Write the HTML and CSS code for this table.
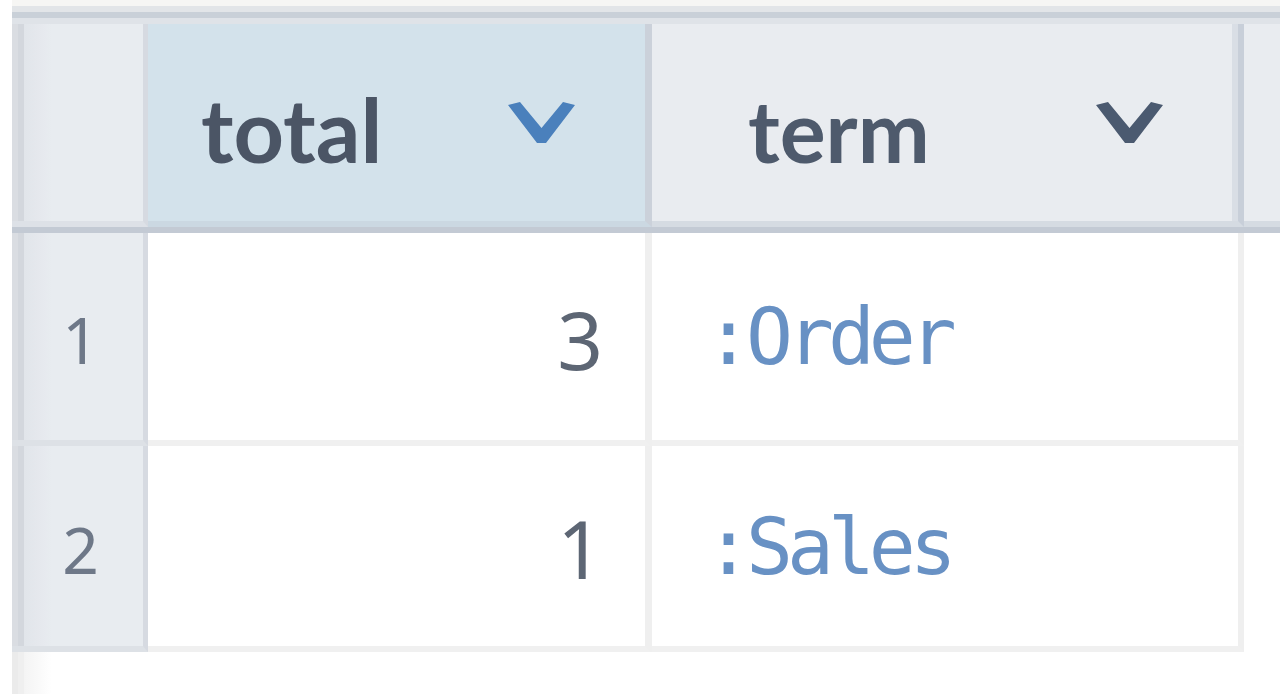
FILE: index.html
```html
<!DOCTYPE html>
<html lang="en">
<head>
<meta charset="utf-8">
<title>Query result</title>
<link rel="stylesheet" href="styles.css">
</head>
<body>
<div class="page">
  <div class="topstrip"></div>
  <div class="toprule"></div>
  <div class="grid-row head-row">
    <div class="gutter gutter-head"></div>
    <div class="hcell hcell-total">
      <span class="hlabel">total</span>
      <svg class="chev chev-blue" viewBox="0 0 67 41" width="67" height="41" aria-hidden="true"><polygon points="0,3 12,0 33.5,26 55,0 67,3 38,41 29,41"/></svg>
    </div>
    <div class="hcell hcell-term">
      <span class="hlabel">term</span>
      <svg class="chev chev-dark" viewBox="0 0 67 41" width="67" height="41" aria-hidden="true"><polygon points="0,3 12,0 33.5,26 55,0 67,3 38,41 29,41"/></svg>
    </div>
    <div class="hcell hcell-rest"></div>
  </div>
  <div class="grid-row data-row row-1">
    <div class="gutter rownum">1</div>
    <div class="cell cell-num">3</div>
    <div class="cell cell-kw">:Order</div>
    <div class="cell-rest"></div>
  </div>
  <div class="grid-row data-row row-2">
    <div class="gutter rownum">2</div>
    <div class="cell cell-num">1</div>
    <div class="cell cell-kw">:Sales</div>
    <div class="cell-rest"></div>
  </div>
  <div class="below"></div>
</div>
</body>
</html>
```
FILE: styles.css
```css
html, body {
  margin: 0;
  padding: 0;
  background: #ffffff;
}

body {
  width: 1280px;
  height: 694px;
  overflow: hidden;
}

.page {
  margin-left: 12px;
  width: 1268px;
}

.topstrip {
  height: 6px;
  background: #f6f6f4;
}

.toprule {
  height: 18px;
  background: linear-gradient(to bottom,
    #e2e5e8 0, #e2e5e8 6px,
    #c9d0d8 6px, #c9d0d8 12px,
    #dfe3e8 12px, #dfe3e8 18px);
}

.grid-row {
  display: grid;
  grid-template-columns: 136px 504px 592px 1fr;
}

/* ---------- header ---------- */
.head-row {
  height: 209px;
  border-bottom: 6px solid #c3cad4;
  box-sizing: border-box;
}

.gutter {
  background: linear-gradient(to right,
    #dadde2 0, #dadde2 6px,
    #d3d7dd 6px, #d3d7dd 12px,
    #e1e5ea 12px, #e6e9ee 30px, #e8ecf0 40px);
  border-right: 5px solid #d6dae1;
}

.gutter-head {
  border-bottom: 6px solid #dde1e7;
}

.hcell {
  display: flex;
  align-items: center;
  justify-content: space-between;
  border-bottom: 6px solid #d5dbe2;
  min-width: 0;
}

.hlabel {
  font-family: Lato, "Open Sans", sans-serif;
  font-weight: 700;
  font-size: 88px;
  line-height: 1.2;
  color: #4b5565;
  margin-top: 14px;
}

.hcell-total {
  background: #d3e2eb;
  border-bottom-color: #cbd8e2;
  border-right: 7px solid #cbd1da;
  padding: 0 70px 0 53px;
}

.hcell-term {
  background: #e9ecf0;
  border-right: 6px solid #c8cfd9;
  box-shadow: inset -6px 0 0 #d9dee5;
  padding: 0 75px 0 96px;
}

.hcell-term .hlabel {
  color: #4e5a6c;
  font-size: 86px;
}

.hcell-rest {
  background: #e9ecf0;
}

.chev {
  display: block;
  flex: none;
}

.chev-blue {
  fill: #4a80bc;
}

.chev-dark {
  fill: #4b5a70;
}

/* ---------- data rows ---------- */
.row-1 {
  height: 213px;
}

.row-2 {
  height: 206px;
}

.rownum {
  display: flex;
  align-items: center;
  justify-content: center;
  border-bottom: 6px solid #dde1e6;
  font-family: "Noto Sans", "Open Sans", sans-serif;
  font-size: 64px;
  color: #6e7888;
  padding-top: 6px;
  padding-left: 6px;
}

.cell {
  display: flex;
  align-items: center;
  background: #ffffff;
  border-bottom: 6px solid #f0f0f0;
}

.cell-num {
  justify-content: flex-end;
  border-right: 7px solid #efefef;
  padding-right: 42px;
  padding-top: 4px;
  font-family: "Noto Sans", "Open Sans", sans-serif;
  font-size: 80px;
  line-height: 1.2;
  color: #5d6674;
}

.cell-kw {
  border-right: 6px solid #efefef;
  padding-left: 53px;
  padding-top: 2px;
  font-family: "DejaVu Sans Mono", "Liberation Mono", monospace;
  font-size: 78px;
  letter-spacing: -6px;
  line-height: 1.16;
  color: #6891c4;
}

.cell-rest {
  background: #ffffff;
}

.below {
  height: 42px;
  width: 60px;
  background: linear-gradient(to right,
    #ebebeb 0, #ebebeb 6px,
    #efefef 6px, #efefef 12px,
    #f4f4f4 12px, #fafafa 28px, #ffffff 40px);
}
```
